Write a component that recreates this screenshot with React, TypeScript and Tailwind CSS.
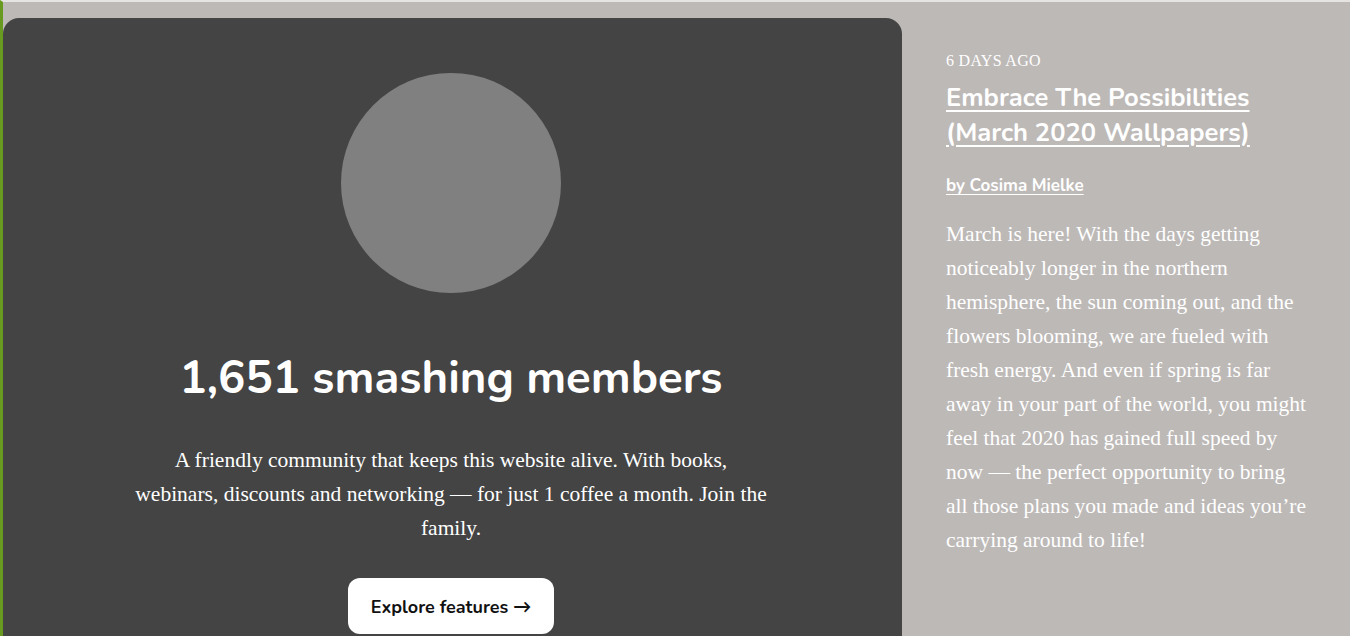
export default function App() {
  return (
    <div className="h-[636px] w-full overflow-hidden bg-[#bdb9b7] border-l-[3px] border-l-[#679a1e] border-t-2 border-t-[#e6e4e2] flex">
      <div className="mt-4 w-[899px] shrink-0 rounded-t-2xl bg-[#444444] flex flex-col items-center pt-[55px] pr-[3px]">
        <div className="w-[220px] h-[220px] rounded-full bg-[#808080]" />
        <h2 className="mt-[56px] text-white font-bold text-[45.5px] leading-[58px] font-['Nunito','Lato',sans-serif]">
          1,651 smashing members
        </h2>
        <p className="mt-[36px] max-w-[640px] text-center text-white text-[21.5px] leading-[34px] font-['Liberation_Serif',serif]">
          A friendly community that keeps this website alive. With books, webinars, discounts and networking — for just 1 coffee a month. Join the family.
        </p>
        <button className="mt-[33px] bg-white rounded-xl w-[206px] h-[56px] pt-[3px] text-[18px] font-bold text-[#111111] font-['Nunito','Lato',sans-serif]">
          Explore features →
        </button>
      </div>
      <div className="pl-[44px] pr-[41px] pt-[49px] text-white">
        <div className="text-[16px] leading-[20px] uppercase tracking-[0.3px] font-['Liberation_Serif',serif]">6 days ago</div>
        <a href="#" className="block mt-[9px] text-[25.5px] leading-[35px] font-bold underline underline-offset-[4px] font-['Nunito','Lato',sans-serif]">
          Embrace The Possibilities (March 2020 Wallpapers)
        </a>
        <a href="#" className="block mt-[24px] text-[17px] leading-[24px] font-bold underline underline-offset-[3px] font-['Nunito','Lato',sans-serif]">
          by Cosima Mielke
        </a>
        <p className="mt-[19px] text-[21.5px] leading-[34px] font-['Liberation_Serif',serif]">
          March is here! With the days getting noticeably longer in the northern hemisphere, the sun coming out, and the flowers blooming, we are fueled with fresh energy. And even if spring is far away in your part of the world, you might feel that 2020 has gained full speed by now — the perfect opportunity to bring all those plans you made and ideas you’re carrying around to life!
        </p>
      </div>
    </div>
  )
}
